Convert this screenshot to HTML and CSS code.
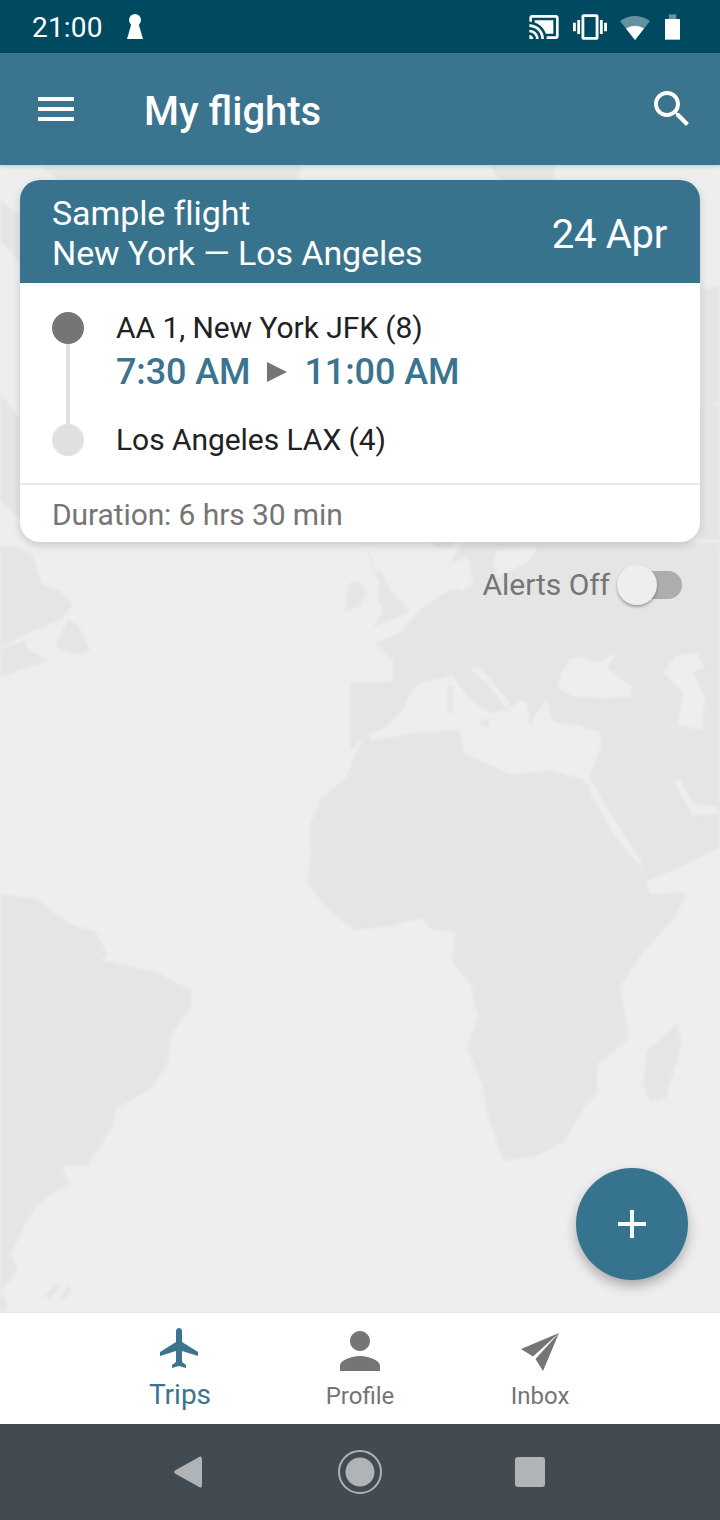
FILE: index.html
```html
<!DOCTYPE html>
<html lang="en">

<head>
    <meta charset="UTF-8">
    <meta name="viewport" content="width=device-width, initial-scale=1.0">
    <title>My flights</title>
    <link rel="stylesheet" href="styles.css">
</head>

<body>
    <div class="status-bar">
        <span class="clock">21:00</span>
        <svg class="keyhole" viewBox="0 0 16 25"><circle cx="8" cy="6" r="6"/><path d="M5 8h6l5 17H0z"/></svg>
        <div class="status-icons">
            <svg class="icon-cast" viewBox="0 0 24 24"><path d="M1 18v3h3c0-1.66-1.34-3-3-3zm0-4v2c2.76 0 5 2.24 5 5h2c0-3.87-3.13-7-7-7zm18-7H5v1.63c3.96 1.28 7.09 4.41 8.37 8.37H19V7zM1 10v2c4.97 0 9 4.03 9 9h2c0-6.08-4.93-11-11-11zm20-7H3c-1.1 0-2 .9-2 2v3h2V5h18v14h-7v2h7c1.1 0 2-.9 2-2V5c0-1.1-.9-2-2-2z"/></svg>
            <svg class="icon-vibrate" viewBox="0 0 24 24"><path d="M0 15h2V9H0v6zm3 2h2V7H3v10zm19-8v6h2V9h-2zm-3 8h2V7h-2v10zM16.5 3h-9C6.67 3 6 3.67 6 4.5v15c0 .83.67 1.5 1.5 1.5h9c.83 0 1.5-.67 1.5-1.5v-15c0-.83-.67-1.5-1.5-1.5zM16 19H8V5h8v14z"/></svg>
            <svg class="icon-wifi" viewBox="0 0 30 26"><path opacity=".4" d="M0 7Q15-3 30 7L15 26z"/><path d="M6 14.500Q15 9 24 14.500L15 26z"/></svg>
            <svg class="icon-battery" viewBox="0 0 16 27"><path opacity=".4" d="M4 0h8v5H4z"/><path d="M0 5h16v22H0z"/></svg>
        </div>
    </div>

    <header class="app-bar">
        <svg class="icon-48" viewBox="0 0 24 24"><path d="M3 18h18v-2H3v2zm0-5h18v-2H3v2zm0-7v2h18V6H3z"/></svg>
        <h1 class="title">My flights</h1>
        <svg class="icon-48" viewBox="0 0 24 24"><path d="M15.500 14h-.79l-.28-.27C15.410 12.590 16 11.110 16 9.500 16 5.910 13.090 3 9.500 3S3 5.910 3 9.500 5.910 16 9.500 16c1.610 0 3.090-.59 4.230-1.570l.27.28v.79l5 4.990L20.490 19l-4.990-5zm-6 0C7.010 14 5 11.990 5 9.500S7.010 5 9.500 5 14 7.010 14 9.500 11.990 14 9.500 14z"/></svg>
    </header>

    <main class="content">
        <!-- world map behind the card, coordinates are page pixels -->
        <svg class="map" viewBox="0 165 720 1147" preserveAspectRatio="none">
            <g class="land">
                <path d="M40 165H302L298 181H60zM490 165H555V181H500zM0 200L20 215V262L0 240zM0 392L20 420V520L0 500zM702 290L720 285V400L702 420zM700 410L720 405V540H700z"/>
                <path d="M0 545L20 548L33 555L42 585L60 590L73 605L60 620L25 635L0 648z"/>
                <path d="M56 645L68 620L78 625L90 650L80 655L60 650zM0 650L25 640L28 650L50 660L20 670L0 678z"/>
                <path d="M365 548L373 560L372 570L382 573L390 590L403 603L410 612L397 618L373 627L383 610L377 597L380 583zM345 612L348 583L360 582L367 593L358 607z"/>
                <path d="M350 682H393V660L375 643L400 633L420 610L433 600L450 590L460 590L452 575L450 563L463 543H720V847L680 867L645 882L641 862L615 821L590 779V800H350z"/>
                <path d="M433 542H453V548H436z"/>
            </g>
            <g class="sea">
                <path d="M367 735L385 728L403 710L410 692L420 683L440 678L453 675L467 697L478 705L490 713L507 710L520 700L527 703L530 727L537 712L547 700L553 722L575 725L600 732L602 743L593 767L583 800H340V760z"/>
                <path d="M470 668H480L495 685L510 703L507 710L490 687z"/>
                <path d="M557 687L563 670L570 658L583 657L597 663L617 653L607 668L632 687L630 697L607 698L573 697z"/>
                <path d="M663 672L677 655L697 653L705 667L693 672L705 697L702 730L677 725L683 693z"/>
                <path d="M673 781L680 779L693 804L716 806L720 814L693 816z"/>
                <path d="M497 550L537 548L530 560L513 570L497 577L493 563zM450 563L468 557L473 583L462 592L453 577z"/>
                <path d="M340 682H350V800H340z"/>
            </g>
            <g class="land">
                <path d="M448 686H453V713H448zM478 722L490 718L488 728z"/>
                <path d="M367 733L354 756L347 776L321 799L309 826L311 854L307 882L326 907L354 930L390 926L422 918L432 930L455 932L452 962L471 985L478 1017L467 1048L482 1083L487 1113L503 1161L537 1156L565 1141L585 1105L597 1093L597 1065L629 1038L620 987L643 952L675 917L687 892L650 894L641 867L615 837L583 779L551 771L510 774L464 754L459 730L413 733L372 741z"/>
                <path d="M677 1022L682 1043L666 1098L650 1102L643 1083L647 1050L666 1035z"/>
                <path d="M0 894L37 899L69 924L96 932L108 955L101 960L156 972L191 990L191 1005L170 1038L168 1063L152 1088L117 1108L112 1128L87 1166L62 1166L69 1183L39 1203L28 1218L11 1254L18 1269L0 1294z"/>
                <path d="M44 1296L55 1285L60 1288L50 1298zM60 1298L68 1285L72 1290L64 1300zM0 1292L7 1303L6 1312H0z"/>
            </g>
        </svg>

        <section class="card">
            <div class="card-head">
                <div class="route">
                    <div>Sample flight</div>
                    <div>New York — Los Angeles</div>
                </div>
                <div class="date">24 Apr</div>
            </div>
            <div class="card-body">
                <div class="timeline">
                    <span class="dot dot-dark"></span>
                    <span class="line"></span>
                    <span class="dot dot-light"></span>
                </div>
                <div class="legs">
                    <div class="leg">AA 1, New York JFK (8)</div>
                    <div class="times">
                        <span>7:30 AM</span>
                        <svg class="arrow" viewBox="0 0 20 20"><path d="M0 0L20 10L0 20z"/></svg>
                        <span>11:00 AM</span>
                    </div>
                    <div class="leg leg-end">Los Angeles LAX (4)</div>
                </div>
            </div>
            <div class="card-foot">Duration: 6 hrs 30 min</div>
        </section>

        <div class="alerts">
            <span>Alerts Off</span>
            <span class="switch"><span class="knob"></span></span>
        </div>

        <button class="fab"><svg viewBox="0 0 28 28"><path d="M12 0h4v12h12v4H16v12h-4V16H0v-4h12z"/></svg></button>
    </main>

    <nav class="bottom-nav">
        <div class="tab tab-active">
            <svg class="tab-icon" viewBox="0 0 24 24"><path d="M21 16v-2l-8-5V3.500c0-.83-.67-1.500-1.500-1.500S10 2.670 10 3.500V9l-8 5v2l8-2.500V19l-2 1.500V22l3.500-1 3.500 1v-1.500L13 19v-5.500l8 2.500z"/></svg>
            <span>Trips</span>
        </div>
        <div class="tab">
            <svg class="tab-icon tab-icon-big" viewBox="0 0 24 24"><path d="M12 12c2.210 0 4-1.790 4-4s-1.790-4-4-4-4 1.790-4 4 1.790 4 4 4zm0 2c-2.670 0-8 1.340-8 4v2h16v-2c0-2.660-5.330-4-8-4z"/></svg>
            <span>Profile</span>
        </div>
        <div class="tab">
            <svg class="tab-icon" viewBox="0 0 48 48"><path d="M43 9L5 25L17 32.500zM43 9L19.500 35L27 47z"/></svg>
            <span>Inbox</span>
        </div>
    </nav>

    <div class="sys-nav">
        <svg class="sys-back" viewBox="0 0 28 32"><path d="M26 0.500Q28 0 28 3V29Q28 32 26 31.500L1 17.500Q-.5 16 1 14.500z"/></svg>
        <svg class="sys-home" viewBox="0 0 44 44"><circle class="ring" cx="22" cy="22" r="21"/><circle cx="22" cy="22" r="14.500"/></svg>
        <span class="sys-square"></span>
    </div>
</body>

</html>
```

FILE: styles.css
```css
* {
    box-sizing: border-box;
}

body {
    margin: 0;
    width: 720px;
    height: 1520px;
    display: flex;
    flex-direction: column;
    overflow: hidden;
    font-family: Roboto, "Liberation Sans", sans-serif;
    background-color: #eeeeee;
}

svg {
    display: block;
    fill: currentColor;
}

.status-bar {
    height: 53px;
    flex: none;
    display: flex;
    align-items: center;
    padding: 0 40px 0 32px;
    background-color: #004a61;
    color: #ffffff;
}

.clock {
    margin-top: 2px;
    font-size: 28px;
    letter-spacing: 0.2px;
}

.keyhole {
    width: 16px;
    height: 25px;
    margin-left: 24px;
}

.status-icons {
    margin-left: auto;
    display: flex;
    align-items: center;
}

.icon-cast {
    width: 32px;
    height: 32px;
    margin-right: 13px;
}

.icon-vibrate {
    width: 34px;
    height: 34px;
    margin-right: 13px;
}

.icon-wifi {
    width: 30px;
    height: 26px;
    margin-right: 15px;
}

.icon-battery {
    width: 15px;
    height: 26px;
}

.app-bar {
    height: 112px;
    flex: none;
    display: flex;
    align-items: center;
    padding: 0 24px 0 32px;
    background-color: #3b748e;
    color: #ffffff;
    position: relative;
    z-index: 2;
    box-shadow: 0 2px 4px rgba(0, 0, 0, 0.12);
}

.icon-48 {
    width: 48px;
    height: 48px;
}

.title {
    margin: 4px 0 0 64px;
    flex: 1;
    font-size: 40px;
    font-weight: 500;
}

.content {
    flex: 1;
    position: relative;
    padding: 15px 20px 0;
    overflow: hidden;
}

.map {
    position: absolute;
    left: 0;
    top: 0;
    width: 720px;
    height: 1147px;
    filter: blur(1px);
}

.land {
    fill: #e5e5e5;
}

.sea {
    fill: #eeeeee;
}

.card {
    position: relative;
    border-radius: 20px;
    background-color: #ffffff;
    overflow: hidden;
    box-shadow: 0 3px 8px rgba(0, 0, 0, 0.16);
}

.card-head {
    height: 103px;
    display: flex;
    align-items: center;
    justify-content: space-between;
    padding: 0 33px 0 32px;
    background-color: #38738e;
    color: #ffffff;
}

.route {
    margin-top: 3px;
    font-size: 34px;
    line-height: 40px;
    letter-spacing: -0.1px;
}

.date {
    margin-top: 5px;
    font-size: 40px;
    letter-spacing: -0.3px;
}

.card-body {
    height: 200px;
    display: flex;
    gap: 32px;
    padding: 29px 32px 27px;
}

.timeline {
    width: 32px;
    display: flex;
    flex-direction: column;
    align-items: center;
}

.dot {
    width: 32px;
    height: 32px;
    flex: none;
    border-radius: 50%;
}

.dot-dark {
    background-color: #757575;
}

.dot-light {
    background-color: #e0e0e0;
}

.line {
    width: 4px;
    flex: 1;
    background-color: #e0e0e0;
}

.legs {
    display: flex;
    flex-direction: column;
    color: #212121;
}

.leg {
    font-size: 30px;
    line-height: 32px;
    letter-spacing: -0.06px;
}

.leg-end {
    margin-top: auto;
}

.times {
    display: flex;
    align-items: center;
    gap: 17px;
    margin-top: 4px;
    font-size: 36px;
    line-height: 48px;
    font-weight: 500;
    letter-spacing: -0.1px;
    color: #3b748e;
}

.arrow {
    width: 20px;
    height: 20px;
    color: #757575;
}

.card-foot {
    height: 59px;
    padding-left: 32px;
    border-top: 2px solid #e8e8e8;
    font-size: 30px;
    line-height: 59px;
    letter-spacing: -0.1px;
    color: #757575;
}

.alerts {
    position: relative;
    display: flex;
    justify-content: flex-end;
    align-items: center;
    gap: 8px;
    padding-right: 18px;
    margin-top: 22px;
    font-size: 30px;
    line-height: 42px;
    letter-spacing: -0.05px;
    color: #757575;
}

.switch {
    position: relative;
    width: 64px;
    height: 28px;
    border-radius: 14px;
    background-color: #adadad;
}

.knob {
    position: absolute;
    left: -1px;
    top: -6px;
    width: 40px;
    height: 40px;
    border-radius: 50%;
    background-color: #eeeeee;
    box-shadow: 0 2px 3px rgba(0, 0, 0, 0.3);
}

.fab {
    position: absolute;
    right: 32px;
    top: 1003px;
    width: 112px;
    height: 112px;
    border: none;
    padding: 42px;
    border-radius: 50%;
    background-color: #35738e;
    color: #ffffff;
    box-shadow: 0 6px 12px rgba(0, 0, 0, 0.28);
}

.bottom-nav {
    height: 112px;
    flex: none;
    display: flex;
    justify-content: center;
    background-color: #ffffff;
    border-top: 1px solid #e6e6e6;
}

.tab {
    width: 180px;
    height: 111px;
    position: relative;
    display: flex;
    flex-direction: column;
    align-items: center;
    padding-top: 11px;
    font-size: 24px;
    color: #757575;
}

.tab span {
    margin-top: 8px;
    line-height: 32px;
}

.tab-icon {
    width: 48px;
    height: 48px;
}

.tab-icon-big {
    width: 60px;
    height: 60px;
    margin: -3px 0 -9px;
}

.tab-active {
    color: #3b748e;
    font-size: 28px;
}

.tab-active span {
    margin-top: 7px;
}

.sys-nav {
    height: 96px;
    flex: none;
    display: flex;
    align-items: center;
    justify-content: center;
    padding-right: 2px;
    background-color: #434b52;
    color: #b0b4b6;
}

.sys-back {
    width: 28px;
    height: 32px;
    margin-right: 136px;
}

.sys-home {
    width: 44px;
    height: 44px;
}

.ring {
    fill: none;
    stroke: #b0b4b6;
    stroke-width: 2px;
}

.sys-square {
    width: 30px;
    height: 30px;
    margin-left: 133px;
    border-radius: 3px;
    background-color: #b0b4b6;
}
```
